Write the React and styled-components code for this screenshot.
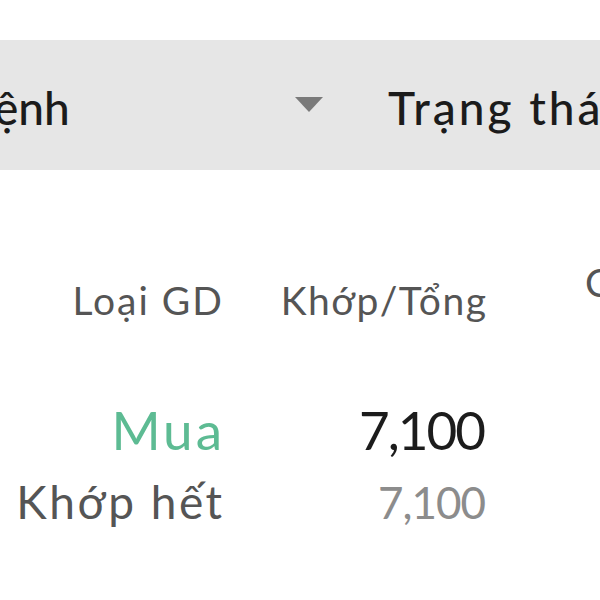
import React from 'react';
import styled, { createGlobalStyle } from 'styled-components';

const Global = createGlobalStyle`
  html, body {
    margin: 0;
    padding: 0;
    background: #ffffff;
    overflow: hidden;
  }
  body {
    font-family: Lato, "Noto Sans", sans-serif;
  }
`;

const Page = styled.div`
  width: 600px;
  height: 600px;
  overflow: hidden;
  background: #fff;
  padding-top: 40px;
  box-sizing: border-box;
`;

const FilterBar = styled.div`
  height: 130px;
  box-sizing: border-box;
  padding-top: 5px;
  background: #e6e6e6;
  display: flex;
  align-items: center;
  white-space: nowrap;
  overflow: hidden;
`;

const FilterCell = styled.div`
  width: 323px;
  flex-shrink: 0;
  display: flex;
  align-items: center;
  justify-content: space-between;
`;

const FilterLabel = styled.span`
  font-size: 46px;
  font-weight: 500;
  color: #1b1b1b;
  letter-spacing: ${p => p.$spacing || 0}px;
  margin-left: ${p => p.$offset || 0}px;
`;

const Caret = styled.span`
  width: 0;
  height: 0;
  border-left: 14px solid transparent;
  border-right: 14px solid transparent;
  border-top: 15px solid #7a7a7a;
  margin-top: -7px;
`;

const Table = styled.div`
  display: grid;
  grid-template-columns: 222px 264px 1fr;
  padding-top: 105px;
  white-space: nowrap;
`;

const HeadCell = styled.div`
  font-size: 39px;
  line-height: 50px;
  color: #555;
  letter-spacing: ${p => p.$spacing || 0}px;
  text-align: ${p => p.$left ? 'left' : 'right'};
  padding-left: ${p => p.$left ? 99 : 0}px;
  margin-right: ${p => p.$left ? 0 : -(p.$spacing || 0)}px;
  margin-top: ${p => p.$raise ? -18 : 0}px;
`;

const Cell = styled.div`
  font-size: ${p => p.$size}px;
  line-height: ${p => p.$lh}px;
  color: ${p => p.$color};
  letter-spacing: ${p => p.$spacing || 0}px;
  text-align: right;
  margin-right: ${p => -(p.$spacing || 0)}px;
  margin-top: ${p => p.$top || 0}px;
`;

export default function App() {
  return (
    <Page>
      <Global />
      <FilterBar>
        <FilterCell>
          <FilterLabel $offset={-6}>ệnh</FilterLabel>
          <Caret />
        </FilterCell>
        <FilterLabel $offset={65} $spacing={3}>Trạng thái</FilterLabel>
      </FilterBar>
      <Table>
        <HeadCell $spacing={2}>Loại GD</HeadCell>
        <HeadCell $spacing={1.5}>Khớp/Tổng</HeadCell>
        <HeadCell $left $raise>Còn lại</HeadCell>

        <Cell $size={53} $lh={60} $spacing={3} $color="#5dbb93" $top={75}>Mua</Cell>
        <Cell $size={53} $lh={60} $spacing={-2} $color="#1c1c1c" $top={75}>7,100</Cell>
        <div />

        <Cell $size={46} $lh={70} $spacing={2.5} $color="#555" $top={7}>Khớp hết</Cell>
        <Cell $size={44} $lh={70} $spacing={-1} $color="#8c8c8c" $top={7}>7,100</Cell>
        <div />
      </Table>
    </Page>
  );
}
